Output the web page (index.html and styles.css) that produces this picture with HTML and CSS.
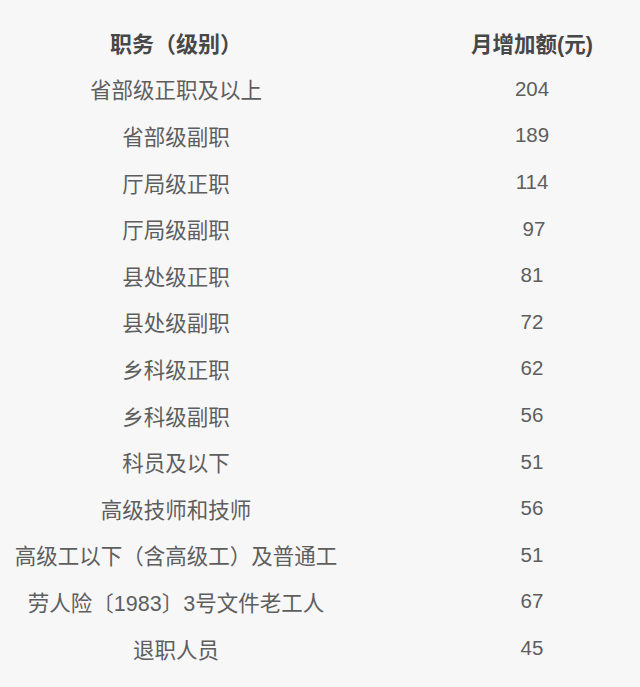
FILE: index.html
```html
<!DOCTYPE html>
<html lang="zh-CN">
<head>
<meta charset="utf-8">
<link rel="stylesheet" href="styles.css">
</head>
<body>
<div class="table">
  <div class="row head"><div class="c1">职务（级别）</div><div class="c2">月增加额(元)</div></div>
  <div class="row"><div class="c1">省部级正职及以上</div><div class="c2">204</div></div>
  <div class="row"><div class="c1">省部级副职</div><div class="c2">189</div></div>
  <div class="row"><div class="c1">厅局级正职</div><div class="c2">114</div></div>
  <div class="row"><div class="c1">厅局级副职</div><div class="c2 shift">97</div></div>
  <div class="row"><div class="c1">县处级正职</div><div class="c2">81</div></div>
  <div class="row"><div class="c1">县处级副职</div><div class="c2">72</div></div>
  <div class="row"><div class="c1">乡科级正职</div><div class="c2">62</div></div>
  <div class="row"><div class="c1">乡科级副职</div><div class="c2">56</div></div>
  <div class="row"><div class="c1">科员及以下</div><div class="c2">51</div></div>
  <div class="row"><div class="c1">高级技师和技师</div><div class="c2">56</div></div>
  <div class="row"><div class="c1">高级工以下（含高级工）及普通工</div><div class="c2">51</div></div>
  <div class="row"><div class="c1">劳人险〔1983〕3号文件老工人</div><div class="c2">67</div></div>
  <div class="row"><div class="c1">退职人员</div><div class="c2">45</div></div>
</div>
</body>
</html>
```

FILE: styles.css
```css
html, body {
  margin: 0;
  padding: 0;
  background: #f7f7f8;
}
.table {
  padding-top: 19px;
  font-family: "Liberation Sans", "Noto Sans CJK SC", sans-serif;
  color: #5e5e5e;
}
.row {
  display: grid;
  grid-template-columns: 352px 216px;
  column-gap: 72px;
  height: 46.6px;
  align-items: center;
}
.c1 {
  text-align: center;
  font-size: 21.5px;
  white-space: nowrap;
}
.c2 {
  text-align: center;
  font-size: 20.5px;
}
.shift {
  padding-left: 4px;
}
.head .c1, .head .c2 {
  font-weight: bold;
  color: #474747;
}
.head .c1 {
  font-size: 22px;
}
.head .c2 {
  font-size: 21.5px;
}
```
